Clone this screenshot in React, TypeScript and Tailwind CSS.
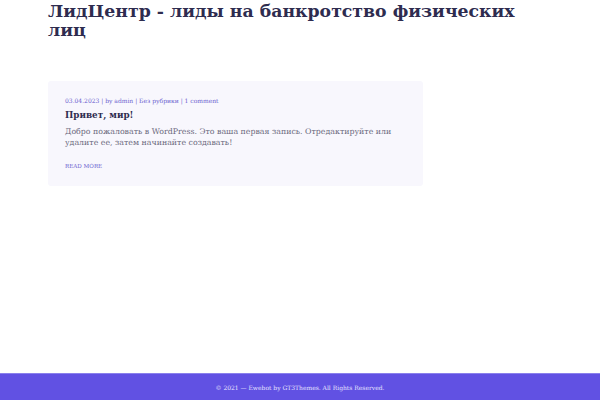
import React from 'react';

const serif = { fontFamily: '"DejaVu Serif", serif' };

export default function App() {
  return (
    <div className="w-[600px] h-[400px] bg-white flex flex-col overflow-hidden" style={serif}>
      <main className="flex-1 px-[48px]">
        <h1 className="text-[17.3px] leading-[19px] font-bold text-[#2e2c4f] pt-[2px] w-[475px]">
          ЛидЦентр - лиды на банкротство физических лиц
        </h1>
        <article className="mt-[41px] w-[375px] h-[105px] bg-[#f8f7fd] rounded-[3px] px-[17px] pt-[16px]">
          <div className="text-[6px] leading-[8px] text-[#6b5fcf]">
            03.04.2023 | by admin | Без рубрики | 1 comment
          </div>
          <h2 className="mt-[4px] text-[8.8px] leading-[13px] font-bold text-[#2e2c4f]">Привет, мир!</h2>
          <p className="mt-[4px] text-[7.85px] leading-[11px] text-[#6a687c]">
            Добро пожаловать в WordPress. Это ваша первая запись. Отредактируйте или удалите ее, затем начинайте создавать!
          </p>
          <div className="mt-[14px] text-[5.6px] leading-[8px] text-[#6b5fcf] uppercase">Read more</div>
        </article>
      </main>
      <footer className="h-[27px] bg-[#6151e3] border-t border-[#8a80ec] flex items-center justify-center">
        <span className="text-[6px] text-[#e6e3ff]">© 2021 — Ewebot by GT3Themes. All Rights Reserved.</span>
      </footer>
    </div>
  );
}
